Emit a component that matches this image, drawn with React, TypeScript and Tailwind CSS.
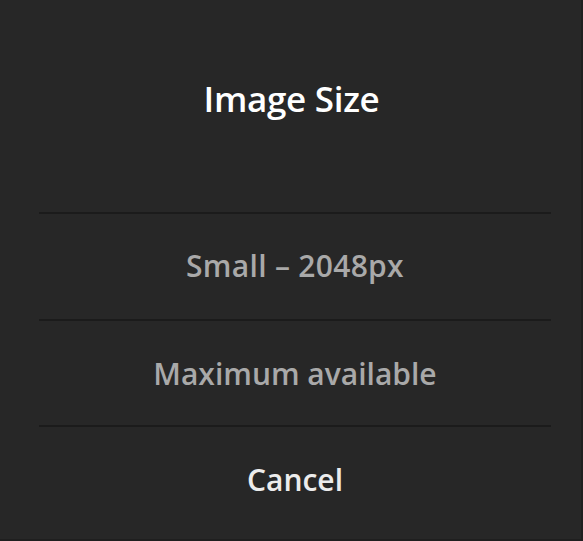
export default function App() {
  return (
    <div
      className="w-[583px] h-[541px] bg-[#272727] flex flex-col overflow-hidden border-r-2 border-b-2 border-[#1f1f1f]"
      style={{ fontFamily: '"Open Sans", "Noto Sans", sans-serif' }}
    >
      <div className="h-[212px] shrink-0 flex justify-center pt-[77px] pl-[2px]">
        <h1 className="text-[35px] leading-[44px] font-semibold text-white tracking-[-0.3px]">Image Size</h1>
      </div>
      <div className="ml-[39px] mr-[30px] shrink-0 border-t-2 border-[#1b1b1b] h-[107px] flex items-center justify-center pb-[2px]">
        <span className="text-[30px] font-semibold text-[#a9a9a9] tracking-[0.3px]">Small – 2048px</span>
      </div>
      <div className="ml-[39px] mr-[30px] shrink-0 border-t-2 border-[#1b1b1b] h-[106px] flex items-center justify-center">
        <span className="text-[30px] font-semibold text-[#a9a9a9]">Maximum available</span>
      </div>
      <div className="ml-[39px] mr-[30px] shrink-0 border-t-2 border-[#1b1b1b] h-[106px] flex items-center justify-center">
        <span className="text-[30px] font-semibold text-[#ececec]">Cancel</span>
      </div>
    </div>
  );
}
